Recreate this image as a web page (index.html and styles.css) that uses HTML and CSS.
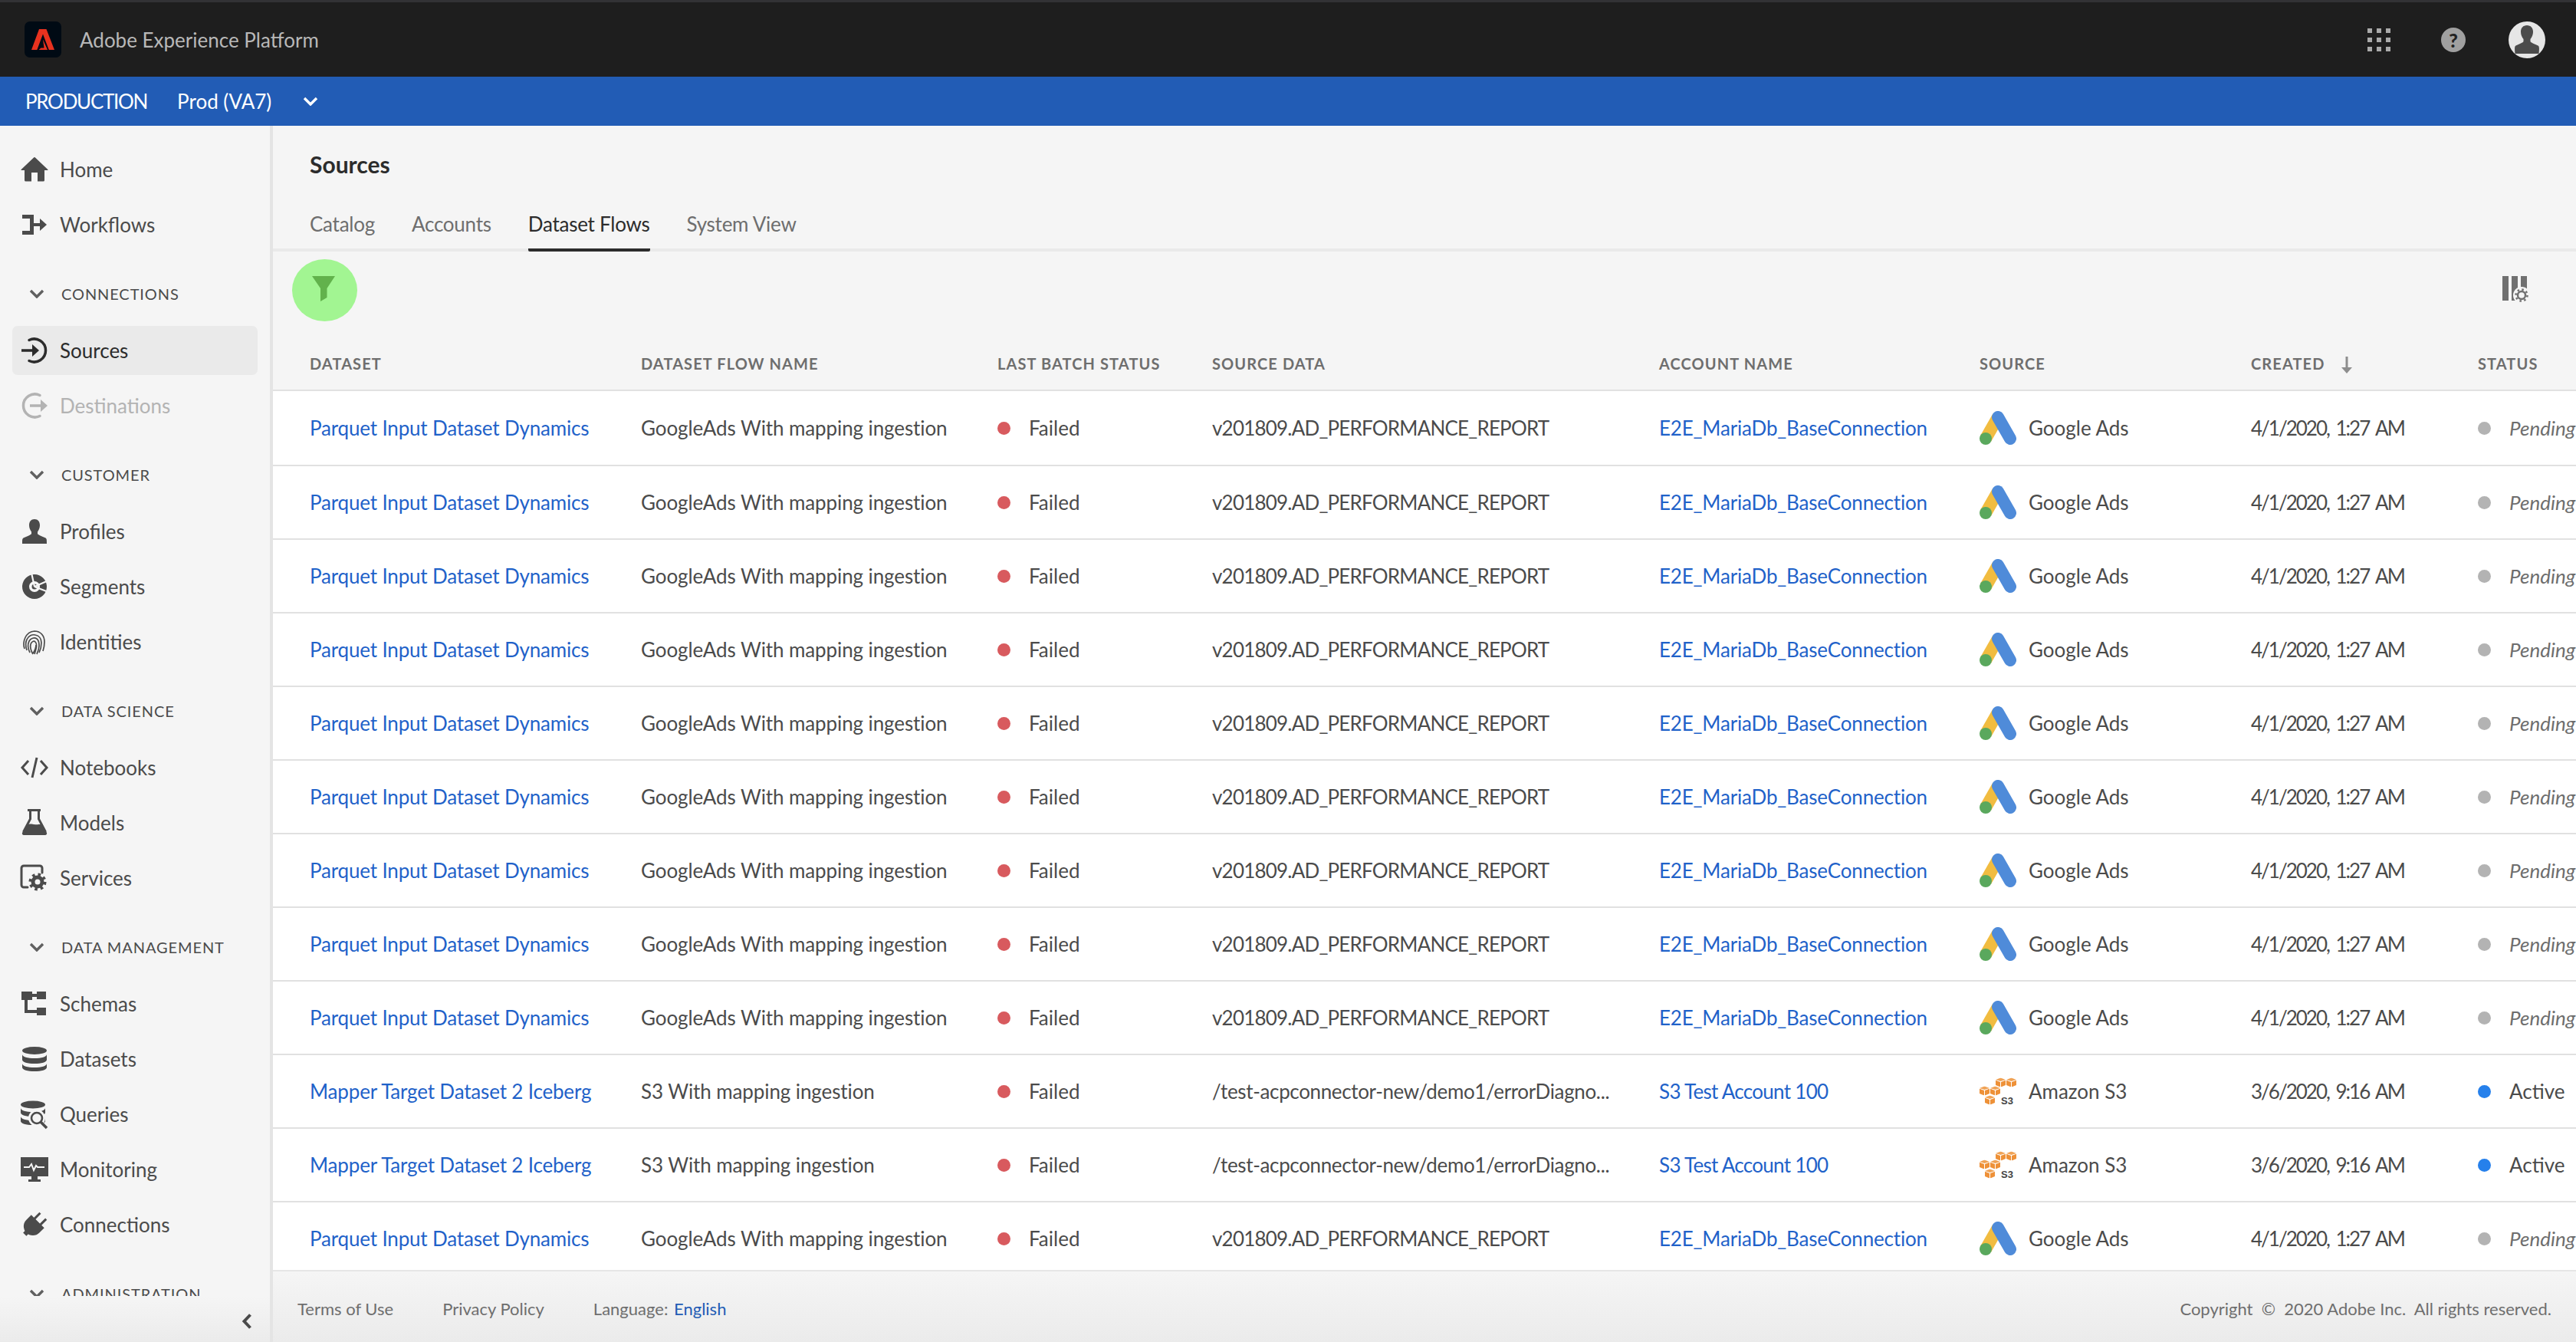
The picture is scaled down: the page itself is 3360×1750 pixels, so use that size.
FILE: index.html
```html
<!DOCTYPE html>
<html lang="en">
<head>
  <meta charset="UTF-8" />
  <title>Sources | Adobe Experience Platform</title>
  <link rel="stylesheet" href="styles.css">
</head>
<body>
  <!-- shared icons -->
  <svg class="sprites" width="0" height="0">
    <symbol id="i-chevron" viewBox="0 0 20 12"><path d="M2 2l8 8 8-8" fill="none" stroke="currentColor" stroke-width="3.4"/></symbol>
    <symbol id="i-ads" viewBox="0 0 48 44">
      <path d="M8 36L24 8" fill="none" stroke="#f1bc40" stroke-width="16"/>
      <circle cx="8" cy="36" r="8" fill="#5aa85d"/>
      <path d="M24 8l16 28" fill="none" stroke="#4f8bd9" stroke-width="16" stroke-linecap="round"/>
    </symbol>
    <symbol id="i-cube" viewBox="0 0 13 12">
      <path d="M0 2.5L6.5 0 13 2.5 6.5 4.6z" fill="#f0a356"/>
      <path d="M0 3.3l6 2.1V12L0 9.6zM7 5.4l6-2.1v6.3L7 12z" fill="#ee9138"/>
    </symbol>
    <symbol id="i-s3" viewBox="0 0 48 35">
      <use href="#i-cube" x="21" y="0" width="13" height="12"/>
      <use href="#i-cube" x="35" y="0" width="13" height="12"/>
      <use href="#i-cube" x="0" y="11" width="13" height="12"/>
      <use href="#i-cube" x="14" y="11" width="13" height="12"/>
      <use href="#i-cube" x="7" y="23" width="13" height="12"/>
      <text x="28" y="34.5" class="s3-text">S3</text>
    </symbol>
  </svg>

  <header class="top-bar">
    <div class="brand">
      <span class="logo">
        <svg width="30" height="27" viewBox="0 0 30 27"><path d="M10 0h9.5L30 27h-7.2L15 6.5 7.3 27H0z" fill="#e8321f"/><path d="M15 13.5L21 27H9.5l3-2.5h4z" fill="#e8321f"/></svg>
      </span>
      <span class="brand-name">Adobe Experience Platform</span>
    </div>
    <div class="top-actions">
      <svg class="apps" width="30" height="30" viewBox="0 0 30 30" fill="#aaa">
        <rect width="6" height="6"/><rect x="12" width="6" height="6"/><rect x="24" width="6" height="6"/>
        <rect y="12" width="6" height="6"/><rect x="12" y="12" width="6" height="6"/><rect x="24" y="12" width="6" height="6"/>
        <rect y="24" width="6" height="6"/><rect x="12" y="24" width="6" height="6"/><rect x="24" y="24" width="6" height="6"/>
      </svg>
      <span class="help">?</span>
      <svg class="avatar" width="48" height="48" viewBox="0 0 48 48">
        <circle cx="24" cy="24" r="24" fill="#e6e6e6"/>
        <path d="M24 5c-5 0-8 3.5-8 8.5 0 4 1.8 7.5 3.5 9.5v3c0 1.5-6 3.5-10 5.500C7.5 32.5 8 37 8.5 42h31c.5-5 1-9.5-1-10.5-4-2-10-4-10-5.5v-3c1.700-2 3.5-5.5 3.5-9.5C32 8.5 29 5 24 5z" fill="#4b4b4b"/>
      </svg>
    </div>
  </header>

  <div class="org-bar">
    <span class="org-name">PRODUCTION</span>
    <span class="org-sandbox">Prod (VA7)</span>
    <svg class="org-chevron" width="20" height="12"><use href="#i-chevron"/></svg>
  </div>

  <div class="layout">
    <aside class="sidebar">
      <nav class="nav">
        <a class="nav-item"><svg class="nav-icon" viewBox="0 0 36 36"><path d="M35 19h-4v13a1.500 1.500 0 0 1-1.500 1.500H22V22h-8v11.500H6.500A1.500 1.500 0 0 1 5 32V19H1a.5.5 0 0 1-.3-.9L17.300 2.300a1 1 0 0 1 1.400 0l16.600 15.800a.5.5 0 0 1-.3.900z"/></svg>Home</a>
        <a class="nav-item"><svg class="nav-icon" viewBox="0 0 36 36"><path d="M2 5h15v26H2v-5h10V10H2zM17 16h8v-6l9 8-9 8v-6h-8z"/></svg>Workflows</a>

        <div class="nav-heading"><svg class="nav-chevron" width="20" height="12"><use href="#i-chevron"/></svg>Connections</div>
        <a class="nav-item active"><svg class="nav-icon" viewBox="0 0 36 36"><path d="M11 4.5A15 15 0 1 1 11 31.5" fill="none" stroke="currentColor" stroke-width="3.5" stroke-linecap="round"/><path d="M1 16.200h14V10l9 8-9 8v-6.200H1z"/></svg>Sources</a>
        <a class="nav-item disabled"><svg class="nav-icon" viewBox="0 0 36 36"><path d="M25 4.5A15 15 0 1 0 25 31.5" fill="none" stroke="currentColor" stroke-width="3.5" stroke-linecap="round"/><path d="M12 16.200h14V10l9 8-9 8v-6.200H12z"/></svg>Destinations</a>

        <div class="nav-heading"><svg class="nav-chevron" width="20" height="12"><use href="#i-chevron"/></svg>Customer</div>
        <a class="nav-item"><svg class="nav-icon" viewBox="0 0 36 36"><path d="M18 2c-4.5 0-7 3.200-7 8 0 3.500 1.500 6.500 3 8.500V21c0 1-6 3.500-10.500 5.500C2 27.500 2 29 2 34h32c0-5 0-6.500-1.500-7.500C28 24.500 22 22 22 21v-2.500c1.500-2 3-5 3-8.500 0-4.800-2.500-8-7-8z"/></svg>Profiles</a>
        <a class="nav-item"><svg class="nav-icon" viewBox="0 0 36 36"><circle cx="18" cy="18" r="11.5" fill="none" stroke="currentColor" stroke-width="9"/><circle cx="18" cy="18" r="3.5"/><path d="M18 18L36 10M18 18l18 7M18 18L14 0" stroke="#f5f5f5" stroke-width="2.2"/></svg>Segments</a>
        <a class="nav-item"><svg class="nav-icon thin" viewBox="0 0 36 36"><path d="M5 27C2 18 6 5 18 4c8 0 13 6 13 14 0 5-1 9-2 12M8 29c-2-6-2-10 0-14 2-5 7-7 11-6 5 1 8 5 8 10 0 5-1 9-3 13M12 32c-3-6-3-11-1-15 2-4 7-5 10-3 3 2 3 6 3 9 0 3-1 7-3 11M16 34c-3-5-4-9-3-13 1-3 4-5 6-3 2 2 2 5 1 9l-2 7M20 22c0 4-2 8-4 11"/></svg>Identities</a>

        <div class="nav-heading"><svg class="nav-chevron" width="20" height="12"><use href="#i-chevron"/></svg>Data Science</div>
        <a class="nav-item"><svg class="nav-icon code" viewBox="0 0 36 36"><path d="M10 9L2 18l8 9M26 9l8 9-8 9M21 5l-6 26"/></svg>Notebooks</a>
        <a class="nav-item"><svg class="nav-icon" viewBox="0 0 36 36"><path d="M9 1.500h17M12.500 2v11L3.500 30M23.500 2v11l9 17" fill="none" stroke="currentColor" stroke-width="3"/><path d="M8 20c6-2 13 2 20-1l6 12c.6 1.500-.5 3-2 3H4c-1.500 0-2.600-1.500-2-3z"/></svg>Models</a>
        <a class="nav-item"><svg class="nav-icon" viewBox="0 0 36 36"><path d="M9 30H4a3 3 0 0 1-3-3V5a3 3 0 0 1 3-3h21a3 3 0 0 1 3 3v6" fill="none" stroke="currentColor" stroke-width="3" stroke-linecap="round"/><circle cx="22" cy="23" r="9.5" fill="none" stroke="currentColor" stroke-width="4" stroke-dasharray="3.5 4"/><circle cx="22" cy="23" r="6" fill="none" stroke="currentColor" stroke-width="5"/></svg>Services</a>

        <div class="nav-heading"><svg class="nav-chevron" width="20" height="12"><use href="#i-chevron"/></svg>Data Management</div>
        <a class="nav-item"><svg class="nav-icon" viewBox="0 0 36 36"><path d="M1 2h14v11H1zM21 2h12v10H21zM21 23h12v10H21zM15 5h6v4h-6zM5 13h4v13h12v4H5z"/></svg>Schemas</a>
        <a class="nav-item"><svg class="nav-icon" viewBox="0 0 36 36"><ellipse cx="18" cy="7" rx="16" ry="5"/><path d="M2 12c0 3 7 5 16 5s16-2 16-5v7c0 3-7 5-16 5S2 22 2 19zM2 24c0 3 7 5 16 5s16-2 16-5v5c0 3-7 5-16 5S2 32 2 29z"/></svg>Datasets</a>
        <a class="nav-item"><svg class="nav-icon" viewBox="0 0 36 36"><ellipse cx="16" cy="5.5" rx="16" ry="5"/><path d="M0 10c0 3 7 5 16 5s16-2 16-5v6c0 3-7 5-16 5S0 19 0 16zM0 21c0 3 7 5 16 5s16-2 16-5v6c0 3-7 5-16 5S0 30 0 27z"/><circle cx="21" cy="23" r="11" fill="#f5f5f5"/><circle cx="21" cy="23" r="7" fill="none" stroke="currentColor" stroke-width="2.6"/><path d="M26 28l8 8" stroke="currentColor" stroke-width="3.5"/></svg>Queries</a>
        <a class="nav-item"><svg class="nav-icon" viewBox="0 0 36 36"><path d="M0 2h36v25H0zM14 27h8v4h4v3H10v-3h4z"/><path d="M4 15h7l3-4 3 8 3-6 2 2h9" fill="none" stroke="#f5f5f5" stroke-width="2"/></svg>Monitoring</a>
        <a class="nav-item"><svg class="nav-icon" viewBox="0 0 36 36"><g transform="rotate(45 18 18) translate(0 2)"><path d="M11 0h3v10h-3zM22 0h3v10h-3zM6 10h24v9a12 12 0 0 1-24 0z"/><rect x="15" y="28" width="6" height="6"/></g></svg>Connections</a>

        <div class="nav-heading"><svg class="nav-chevron" width="20" height="12"><use href="#i-chevron"/></svg>Administration</div>
      </nav>
      <div class="sidebar-foot">
        <svg width="14" height="22" viewBox="0 0 14 22"><path d="M11.5 2.5L3.5 11l8 8.5" fill="none" stroke="#4b4b4b" stroke-width="4"/></svg>
      </div>
    </aside>

    <main class="content">
      <h1 class="page-title">Sources</h1>
      <div class="tabs">
        <a class="tab">Catalog</a>
        <a class="tab">Accounts</a>
        <a class="tab selected">Dataset Flows</a>
        <a class="tab">System View</a>
      </div>
      <div class="toolbar">
        <button class="filter-btn">
          <svg width="30" height="33" viewBox="0 0 30 33"><path d="M0 0h30L19.5 16v12L11 33V16z" fill="#62b24c"/></svg>
        </button>
        <svg class="col-settings" width="36" height="36" viewBox="0 0 36 36">
          <path d="M0 0h8v32H0zM12 0h8v32h-8zM24 0h8v32h-8z" fill="#707070"/>
          <circle cx="25" cy="25" r="11" fill="#f5f5f5"/>
          <circle cx="25" cy="25" r="7.5" fill="none" stroke="#707070" stroke-width="2.5" stroke-dasharray="2.5 3.4"/>
          <circle cx="25" cy="25" r="5" fill="none" stroke="#707070" stroke-width="2.5"/>
        </svg>
      </div>

      <div class="table-wrap">
        <table class="flows">
          <colgroup>
            <col class="c-dataset"><col class="c-flow"><col class="c-batch"><col class="c-data"><col class="c-account"><col class="c-source"><col class="c-created"><col class="c-status">
          </colgroup>
          <thead>
            <tr>
              <th>Dataset</th><th>Dataset Flow Name</th><th>Last Batch Status</th><th>Source Data</th><th>Account Name</th><th>Source</th>
              <th>Created <svg class="sort" width="14" height="22" viewBox="0 0 14 22"><path d="M5.5 0h3v14H14l-7 8-7-8h5.5z" fill="#8e8e8e"/></svg></th>
              <th>Status</th>
            </tr>
          </thead>
          <tbody id="rows"></tbody>
        </table>
      </div>

      <footer class="footer">
        <a>Terms of Use</a>
        <a>Privacy Policy</a>
        <span>Language: <a class="lang">English</a></span>
        <span class="copyright">Copyright &nbsp;©&nbsp; 2020 Adobe Inc.&nbsp; All rights reserved.</span>
      </footer>
    </main>
  </div>

  <script>
    const ads = {
      kind: 'ads',
      dataset: 'Parquet Input Dataset Dynamics',
      flow: 'GoogleAds With mapping ingestion',
      data: 'v201809.AD_PERFORMANCE_REPORT',
      account: 'E2E_MariaDb_BaseConnection',
      icon: 'i-ads', source: 'Google Ads',
      created: '4/1/2020, 1:27 AM',
      status: 'Pending'
    };
    const s3 = {
      kind: 's3',
      dataset: 'Mapper Target Dataset 2 Iceberg',
      flow: 'S3 With mapping ingestion',
      data: '/test-acpconnector-new/demo1/errorDiagno...',
      account: 'S3 Test Account 100',
      icon: 'i-s3', source: 'Amazon S3',
      created: '3/6/2020, 9:16 AM',
      status: 'Active'
    };
    const flows = [ads, ads, ads, ads, ads, ads, ads, ads, ads, s3, s3, ads];

    document.getElementById('rows').innerHTML = flows.map((f) => `
      <tr class="${f.kind}">
        <td><a class="link">${f.dataset}</a></td>
        <td class="cell-flow">${f.flow}</td>
        <td class="low"><span class="dot failed"></span>Failed</td>
        <td class="cell-data">${f.data}</td>
        <td class="cell-account"><a class="link">${f.account}</a></td>
        <td class="low"><span class="source"><svg class="source-icon"><use href="#${f.icon}"/></svg>${f.source}</span></td>
        <td class="cell-date">${f.created}</td>
        <td class="low ${f.status.toLowerCase()}"><span class="dot"></span><span class="status-text">${f.status}</span></td>
      </tr>`).join('');
  </script>
</body>
</html>
```

FILE: styles.css
```css
* {
  box-sizing: border-box;
}

html, body {
  height: 100%;
}

body {
  margin: 0;
  display: flex;
  flex-direction: column;
  overflow: hidden;
  background: #f5f5f5;
  color: #4b4b4b;
  font-family: Lato, "Noto Sans", sans-serif;
  font-size: 26px;
}

.sprites {
  position: absolute;
}

.s3-text {
  font: bold 13px "Liberation Sans", sans-serif;
  fill: #444;
}

/* top bars */
.top-bar {
  flex: none;
  height: 100px;
  display: flex;
  align-items: center;
  justify-content: space-between;
  background: #1e1e1e;
  border-top: 3px solid #323235;
}

.brand {
  display: flex;
  align-items: center;
  gap: 24px;
  padding-left: 32px;
}

.logo {
  width: 48px;
  height: 47px;
  display: flex;
  align-items: center;
  justify-content: center;
  background: #000a14;
  border-radius: 7px;
}

.brand-name {
  color: #b8b8b8;
}

.top-actions {
  display: flex;
  align-items: center;
  padding-right: 40px;
}

.apps {
  margin-right: 66px;
}

.help {
  width: 32px;
  height: 32px;
  margin-right: 56px;
  display: flex;
  align-items: center;
  justify-content: center;
  border-radius: 50%;
  background: #a0a0a0;
  color: #222;
  font-size: 25px;
  font-weight: 900;
}

.org-bar {
  flex: none;
  height: 64px;
  display: flex;
  align-items: center;
  padding-left: 33px;
  background: #225cb5;
  color: #fff;
}

.org-name {
  letter-spacing: -1.3px;
}

.org-sandbox {
  margin-left: 39px;
}

.org-chevron {
  margin-left: 41px;
}

/* sidebar */
.layout {
  flex: 1;
  min-height: 0;
  display: flex;
}

.sidebar {
  flex: none;
  width: 356px;
  display: flex;
  flex-direction: column;
  border-right: 4px solid #e4e4e4;
}

.nav {
  flex: 1;
  min-height: 0;
  display: flex;
  flex-direction: column;
  overflow: hidden;
  padding-top: 21px;
}

.nav-item {
  flex: none;
  height: 64px;
  margin: 4px 16px;
  padding-left: 11px;
  display: flex;
  align-items: center;
  gap: 15px;
  border-radius: 7px;
  color: #4b4b4b;
}

.nav-item.active {
  background: #eaeaea;
  color: #2c2c2c;
}

.nav-item.disabled {
  color: #b3b3b3;
}

.nav-icon {
  flex: none;
  width: 36px;
  height: 36px;
  fill: currentColor;
  overflow: visible;
}

.nav-icon.thin {
  fill: none;
  stroke: currentColor;
  stroke-width: 1.7;
}

.nav-icon.code {
  fill: none;
  stroke: currentColor;
  stroke-width: 3;
}

.nav-heading {
  flex: none;
  height: 76px;
  margin-top: 16px;
  padding-left: 38px;
  display: flex;
  align-items: center;
  gap: 22px;
  font-size: 20px;
  letter-spacing: 0.9px;
  text-transform: uppercase;
}

.nav-chevron {
  flex: none;
  color: #606060;
}

.sidebar-foot {
  flex: none;
  height: 60px;
  padding: 22px 23px 0 0;
  display: flex;
  justify-content: flex-end;
  background: linear-gradient(#f5f5f5, #ebebeb);
}

/* content */
.content {
  flex: 1;
  min-width: 0;
  display: flex;
  flex-direction: column;
}

.page-title {
  flex: none;
  height: 92px;
  margin: 0;
  padding: 32px 0 0 48px;
  color: #2c2c2c;
  font-size: 30px;
  font-weight: 700;
  line-height: 36px;
}

.tabs {
  flex: none;
  height: 72px;
  display: flex;
  gap: 48px;
  padding-left: 48px;
  border-bottom: 4px solid #eaeaea;
  letter-spacing: -0.25px;
}

.tab {
  height: 72px;
  line-height: 72px;
  color: #6e6e6e;
}

.tab.selected {
  color: #2c2c2c;
  border-bottom: 4px solid #2c2c2c;
  border-radius: 0 0 2px 2px;
}

.toolbar {
  flex: none;
  height: 112px;
  display: flex;
  align-items: flex-start;
  justify-content: space-between;
  padding: 10px 60px 0 25px;
}

.filter-btn {
  width: 85px;
  height: 81px;
  padding: 0 4px 4px 0;
  display: flex;
  align-items: center;
  justify-content: center;
  border: none;
  border-radius: 50%;
  background: #a2f592;
}

.col-settings {
  margin-top: 22px;
}

.table-wrap {
  flex: 1;
  min-height: 0;
  overflow: hidden;
}

.flows {
  width: 3004px;
  table-layout: fixed;
  border-collapse: separate;
  border-spacing: 0;
}

.c-dataset { width: 480px; }
.c-flow { width: 465px; }
.c-batch { width: 280px; }
.c-data { width: 583px; }
.c-account { width: 418px; }
.c-source { width: 354px; }
.c-created { width: 296px; }
.c-status { width: 128px; }

.flows th {
  height: 70px;
  padding: 0;
  text-align: left;
  color: #6e6e6e;
  font-size: 20px;
  font-weight: 700;
  letter-spacing: 1.1px;
  text-transform: uppercase;
  border-bottom: 2px solid #e1e1e1;
}

.sort {
  margin-left: 16px;
  vertical-align: -5px;
}

.flows td {
  height: 96px;
  padding: 0 0 1px;
  background: #fff;
  white-space: nowrap;
  overflow: hidden;
  border-bottom: 2px solid #e1e1e1;
}

.flows td.low {
  padding-bottom: 0;
}

.flows tbody tr:first-child td {
  height: 98px;
}

.flows th:first-child,
.flows td:first-child {
  padding-left: 48px;
}

.cell-flow {
  letter-spacing: -0.1px;
}

.ads .cell-data {
  letter-spacing: -0.8px;
}

.s3 .cell-data {
  letter-spacing: -0.36px;
}

.cell-date {
  letter-spacing: -2px;
  word-spacing: 4px;
}

.link {
  color: #1f62c9;
  letter-spacing: -0.17px;
}

.s3 .cell-account .link {
  letter-spacing: -0.7px;
}

.dot {
  display: inline-block;
  width: 17px;
  height: 17px;
  margin-right: 24px;
  border-radius: 50%;
  vertical-align: 1px;
}

.dot.failed {
  background: #d85a5e;
}

.pending .dot {
  background: #b3b3b3;
}

.active .dot {
  background: #2680eb;
}

.pending .status-text {
  color: #6e6e6e;
  font-style: italic;
}

.source {
  display: flex;
  align-items: center;
  gap: 16px;
}

.source-icon {
  flex: none;
  width: 48px;
  height: 44px;
}

/* footer */
.footer {
  flex: none;
  height: 94px;
  display: flex;
  align-items: center;
  gap: 64px;
  padding: 5px 32px 0;
  background: linear-gradient(#f5f5f5, #ebebeb);
  border-top: 2px solid #e6e6e6;
  color: #6e6e6e;
  font-size: 22px;
}

.lang {
  margin-left: 2px;
  color: #225cb5;
}

.copyright {
  margin-left: auto;
}
```
